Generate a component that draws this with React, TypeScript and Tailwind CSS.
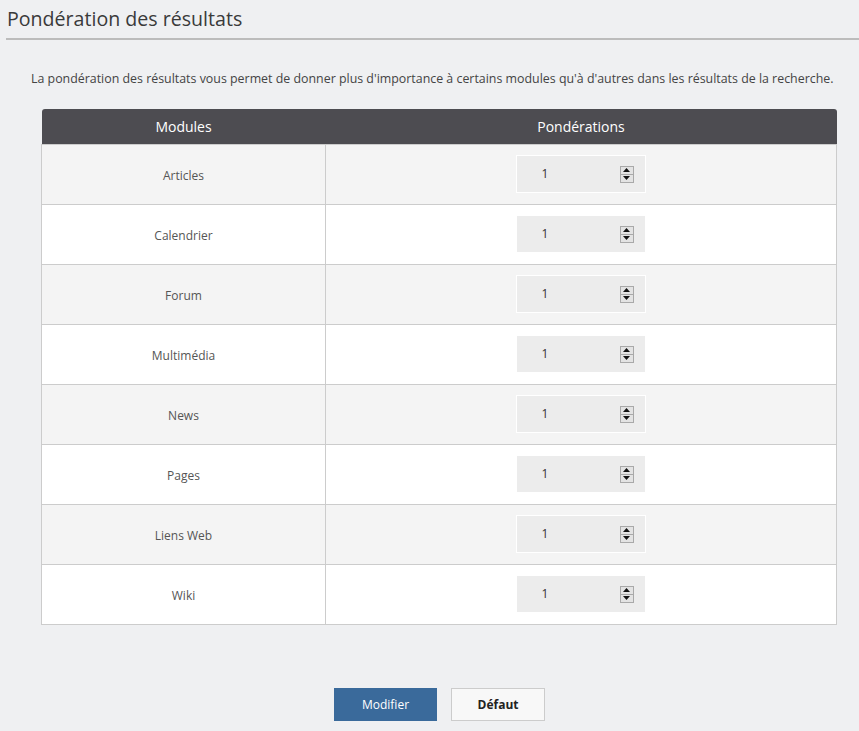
const modules = ["Articles", "Calendrier", "Forum", "Multimédia", "News", "Pages", "Liens Web", "Wiki"];

const Spinner = () => (
    <div className="flex flex-col w-[14px] h-[17px] border border-[#a9a9a9] bg-[#e3e3e3]">
        <div className="flex-1 flex items-center justify-center border-b border-[#a9a9a9]">
            <svg width="7" height="4" viewBox="0 0 7 4"><path d="M0 4 L3.5 0 L7 4 Z" fill="#111" /></svg>
        </div>
        <div className="flex-1 flex items-center justify-center">
            <svg width="7" height="4" viewBox="0 0 7 4"><path d="M0 0 L3.5 4 L7 0 Z" fill="#111" /></svg>
        </div>
    </div>
);

export default function App() {
    return (
        <div className="min-h-[731px] w-[859px] bg-[#eff0f2] text-[#333] font-['Open_Sans',sans-serif]">
            <div className="pl-[7px] pt-[5px]">
                <h1 className="text-[19.6px] leading-[28px] text-[#3a3a3a]">Pondération des résultats</h1>
            </div>
            <div className="ml-[6px] mt-[5px] h-[2px] bg-[#bcbcbc]" />

            <p className="mt-[30px] pl-[31px] text-[12.4px] leading-[18px] text-[#444]">
                La pondération des résultats vous permet de donner plus d'importance à certains modules qu'à d'autres dans les résultats de la recherche.
            </p>

            <div className="mt-[21px] mx-[41px] w-[796px]">
                <table className="w-full border-collapse">
                    <thead>
                        <tr className="bg-[#4d4c51] text-white text-[14px] h-[35px]">
                            <th className="w-[284px] font-normal rounded-tl-[3px]">Modules</th>
                            <th className="font-normal rounded-tr-[3px]">Pondérations</th>
                        </tr>
                    </thead>
                    <tbody>
                        {modules.map((m, i) => (
                            <tr key={m} className={i % 2 === 0 ? "bg-[#f4f4f4] h-[60px]" : "bg-white h-[60px]"}>
                                <td className="border border-[#cccccc] text-center text-[12px] text-[#555] pt-[3px]">{m}</td>
                                <td className="border border-[#cccccc]">
                                    <div className="flex justify-center">
                                        <div className="ml-[-1px] w-[130px] h-[38px] bg-[#ececec] border border-white flex items-center justify-between pl-[25px] pr-[11px] text-[12px] text-[#333]">
                                            <span>1</span>
                                            <Spinner />
                                        </div>
                                    </div>
                                </td>
                            </tr>
                        ))}
                    </tbody>
                </table>
            </div>

            <div className="mt-[63px] flex justify-center gap-[14px] pl-[20px] pb-[10px]">
                <button className="w-[103px] h-[33px] bg-[#3a6a9b] text-white text-[12px] pt-[2px]">Modifier</button>
                <button className="w-[94px] h-[33px] bg-[#f8f8f8] border border-[#cccccc] text-[12px] font-bold text-[#222] pt-[2px]">Défaut</button>
            </div>
        </div>
    );
}
